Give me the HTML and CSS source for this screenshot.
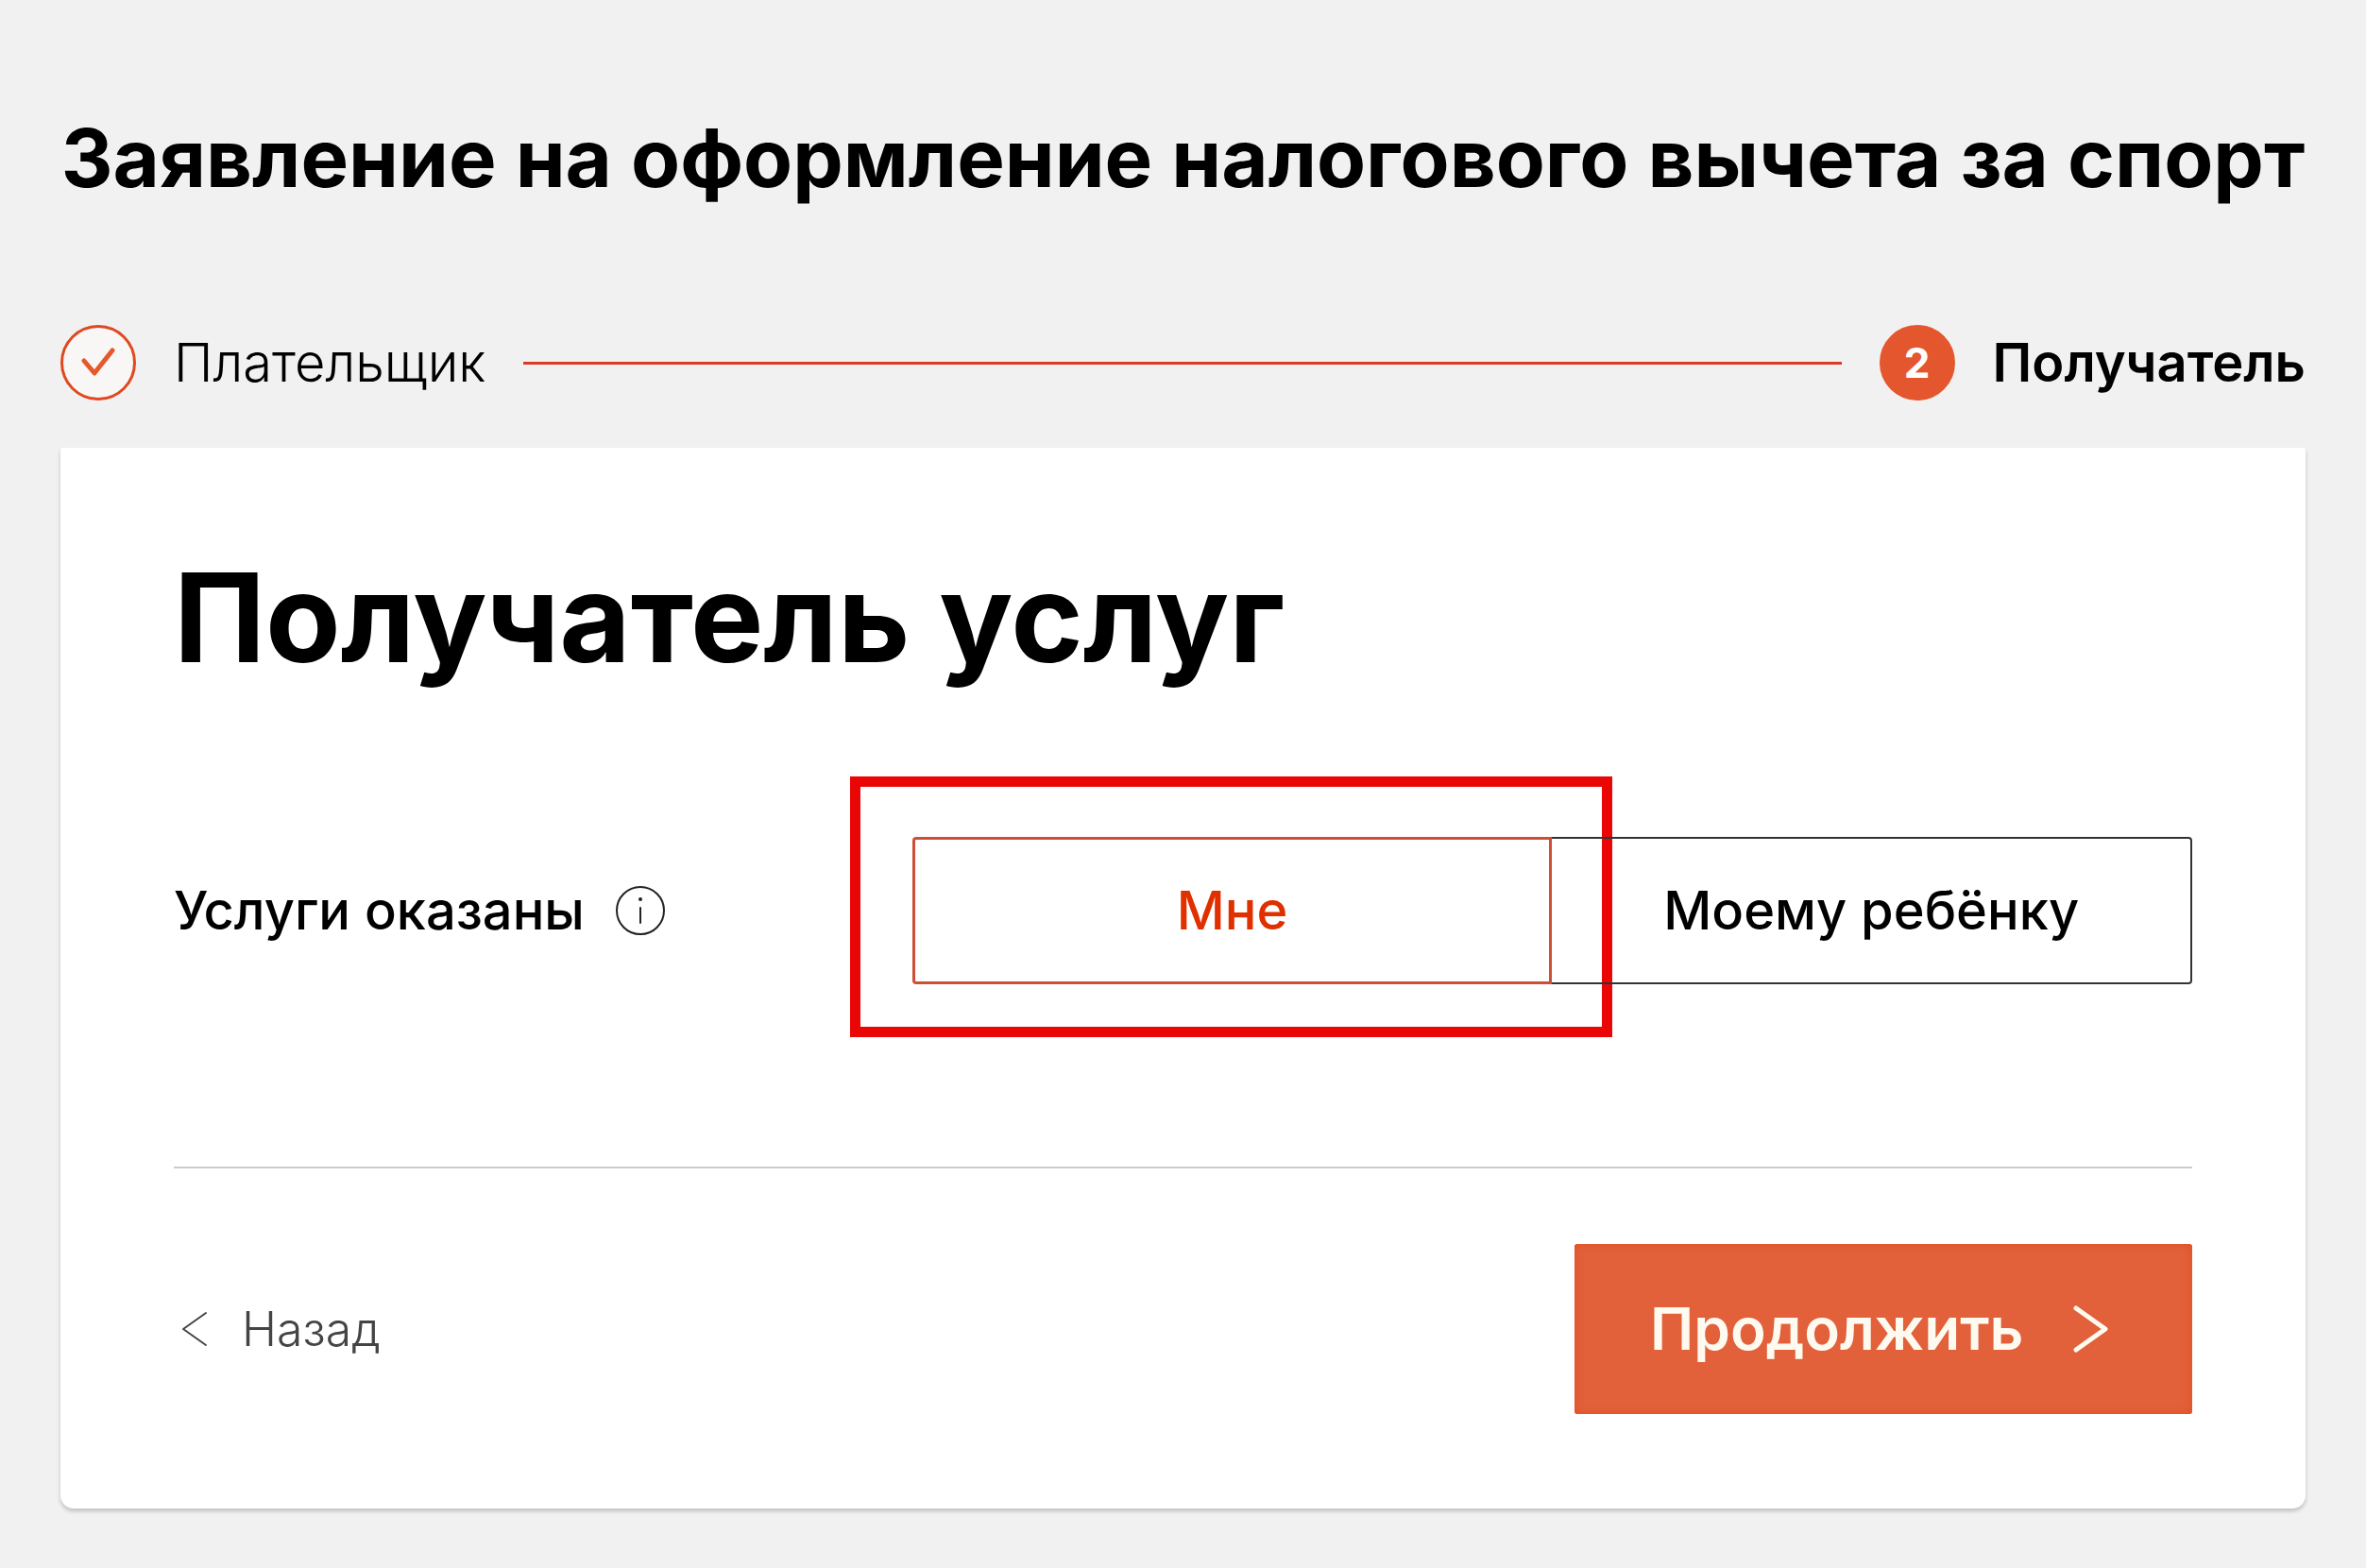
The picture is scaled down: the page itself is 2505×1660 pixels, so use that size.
FILE: index.html
```html
<!DOCTYPE html>
<html lang="ru">
<head>
  <meta charset="UTF-8">
  <meta name="viewport" content="width=device-width, initial-scale=1">
  <title>Заявление на оформление налогового вычета за спорт</title>
  <link rel="stylesheet" href="styles.css">
</head>
<body>

  <main class="page">
    <h1 class="page-title">Заявление на оформление налогового вычета за спорт</h1>

    <!-- Шаги -->
    <ol class="steps">
      <li class="step">
        <span class="step-mark">
          <svg class="icon-check" viewBox="0 0 36 34" aria-hidden="true">
            <path d="M3 15 L14 28 L33 4" />
          </svg>
        </span>
        Плательщик
      </li>
      <li class="step-line" aria-hidden="true"></li>
      <li class="step step-active" aria-current="step">
        <span class="step-mark">2</span>
        Получатель
      </li>
    </ol>

    <!-- Карточка формы -->
    <form class="card">
      <h2>Получатель услуг</h2>

      <div class="field">
        <div class="field-label">
          <span id="recipient-label">Услуги оказаны</span>
          <button class="info-btn" type="button" aria-label="Подсказка">
            <svg viewBox="0 0 54 54" aria-hidden="true">
              <circle cx="27" cy="27" r="25" />
              <path d="M27 24 V40" />
              <circle class="dot" cx="27" cy="15" r="2" />
            </svg>
          </button>
        </div>

        <div class="switch" role="radiogroup" aria-labelledby="recipient-label">
          <div class="option">
            <input type="radio" name="recipient" id="recipient-me" checked>
            <label for="recipient-me">Мне</label>
            <span class="highlight"></span>
          </div>
          <div class="option">
            <input type="radio" name="recipient" id="recipient-child">
            <label for="recipient-child">Моему ребёнку</label>
          </div>
        </div>
      </div>

      <div class="actions">
        <a class="back" href="#">
          <svg viewBox="0 0 28 38" aria-hidden="true"><path d="M26 2 L2 19 L26 36" /></svg>
          Назад
        </a>
        <button class="next" type="submit">
          Продолжить
          <svg viewBox="0 0 38 50" aria-hidden="true"><path d="M3 3 L34 25 L3 47" /></svg>
        </button>
      </div>
    </form>
  </main>

</body>
</html>
```
FILE: styles.css
```css
* {
  margin: 0;
  padding: 0;
  box-sizing: border-box;
}
body {
  background-color: #f1f1f1;
  color: #000;
  font-family: Inter, "Open Sans", sans-serif;
  font-size: 56px;
  line-height: 64px;
}
button, input {
  font: inherit;
}
svg {
  display: block;
  fill: none;
  stroke: currentColor;
  stroke-linecap: round;
  stroke-linejoin: round;
}
.page {
  padding: 120px 64px 62px;
}
.page-title {
  font-size: 85px;
  line-height: 96px;
  font-weight: 700;
  text-align: center;
  white-space: nowrap;
}

/* Шаги */
.steps {
  display: flex;
  align-items: center;
  gap: 40px;
  margin-top: 128px;
  list-style: none;
}
.step {
  display: flex;
  align-items: center;
  gap: 40px;
  font-weight: 300;
}
.step-active {
  font-weight: 600;
}
.step-mark {
  display: flex;
  align-items: center;
  justify-content: center;
  width: 80px;
  height: 80px;
  border: 3px solid #e0481f;
  border-radius: 50%;
  color: #e55a2b;
  background-color: #f8f7f6;
}
.step-active .step-mark {
  background-color: #e4572e;
  border-color: #e4572e;
  color: #fff;
  font-size: 44px;
  font-weight: 700;
}
.icon-check {
  width: 36px;
  height: 34px;
  stroke-width: 5px;
}
.step-line {
  flex: 1;
  height: 3px;
  background-color: #dc3a26;
}

/* Карточка */
.card {
  margin-top: 50px;
  padding: 116px 120px 100px;
  background-color: #fff;
  border-radius: 2px 2px 14px 14px;
  box-shadow: 0 3px 4px rgba(0, 0, 0, 0.2);
}
.card h2 {
  font-size: 130px;
  line-height: 128px;
  font-weight: 700;
}
.field {
  display: grid;
  grid-template-columns: 15fr 26fr;
  align-items: center;
  margin-top: 168px;
}
.field-label {
  display: flex;
  align-items: center;
  gap: 32px;
  font-weight: 500;
}
.info-btn {
  width: 54px;
  height: 54px;
  border: 0;
  background: none;
  color: #222;
}
.info-btn svg {
  stroke-width: 2px;
}
.info-btn .dot {
  fill: currentColor;
  stroke: none;
}
.switch {
  display: grid;
  grid-template-columns: 1fr 1fr;
}
.option {
  position: relative;
}
.option input {
  position: absolute;
  inset: 0;
  opacity: 0;
}
.option label {
  display: flex;
  align-items: center;
  justify-content: center;
  height: 156px;
  border: 2px solid #333;
  border-left: 0;
  border-radius: 0 4px 4px 0;
  font-weight: 500;
}
.option input:checked + label {
  border: 3px solid #cd4f38;
  border-radius: 4px 0 0 4px;
  color: #e03000;
}
/* Красная рамка вокруг выбранного варианта */
.highlight {
  position: absolute;
  inset: -64px -64px -56px -66px;
  border: 11px solid #eb0606;
  pointer-events: none;
}

/* Кнопки */
.actions {
  display: flex;
  align-items: center;
  justify-content: space-between;
  margin-top: 193px;
  padding-top: 80px;
  border-top: 2px solid #ccc;
}
.back {
  display: flex;
  align-items: center;
  gap: 36px;
  padding-left: 8px;
  color: #444;
  font-size: 50px;
  font-weight: 300;
  text-decoration: none;
}
.back svg {
  width: 28px;
  height: 38px;
  stroke-width: 2px;
}
.next {
  display: flex;
  align-items: center;
  justify-content: space-between;
  width: 654px;
  height: 180px;
  padding: 0 88px 0 80px;
  border: 0;
  border-radius: 3px;
  background-color: #e2603a;
  box-shadow: inset 0 0 10px #e04e20;
  color: #fffaf0;
  font-size: 62px;
  font-weight: 600;
}
.next svg {
  width: 38px;
  height: 50px;
  stroke-width: 5px;
}
```
